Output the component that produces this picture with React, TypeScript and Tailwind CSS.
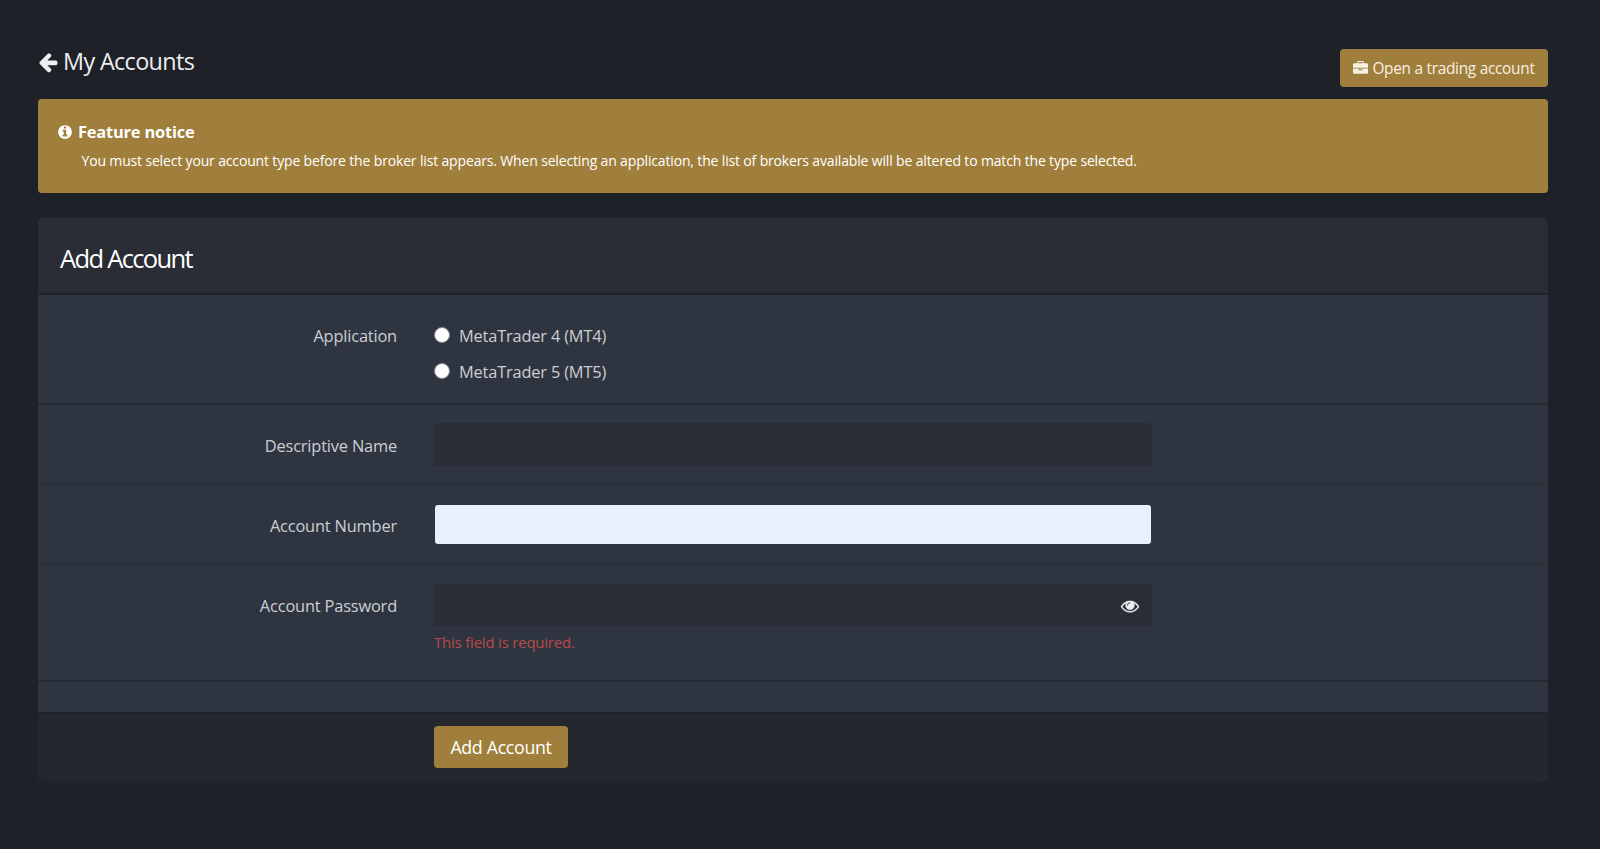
import React, { useState } from "react";

const icons = {
  arrowLeft:
    "M1664 896v128q0 53-32.5 90.5t-84.5 37.5h-704l293 294q38 36 38 90t-38 90l-75 76q-37 37-90 37-52 0-91-37l-651-652q-37-37-37-90 0-52 37-91l651-650q38-38 91-38 52 0 90 38l75 74q38 38 38 91t-38 91l-293 293h704q52 0 84.5 37.5t32.5 90.5z",
  eye: "M1664 960q-152-236-381-353 61 104 61 225 0 185-131.5 316.5t-316.5 131.5-316.5-131.5-131.5-316.5q0-121 61-225-229 117-381 353 133 205 333.5 326.5t434.5 121.5 434.5-121.5 333.5-326.5zm-720-384q0-20-14-34t-34-14q-125 0-214.5 89.5t-89.5 214.5q0 20 14 34t34 14 34-14 14-34q0-86 61-147t147-61q20 0 34-14t14-34zm848 384q0 34-20 69-140 230-376.5 368.5t-499.5 138.5-499.5-139-376.5-368q-20-35-20-69t20-69q140-229 376.5-368t499.5-139 499.5 139 376.5 368q20 35 20 69z",
  briefcase:
    "M640 256h512v-128h-512v128zm1152 640v480q0 66-47 113t-113 47h-1472q-66 0-113-47t-47-113v-480h672v160q0 26 19 45t45 19h320q26 0 45-19t19-45v-160h672zm-768 0v128h-256v-128h256zm768-480v384h-1792v-384q0-66 47-113t113-47h352v-160q0-40 28-68t68-28h576q40 0 68 28t28 68v160h352q66 0 113 47t47 113z",
  info: "M1152 1376v-160q0-14-9-23t-23-9h-96v-512q0-14-9-23t-23-9h-320q-14 0-23 9t-9 23v160q0 14 9 23t23 9h96v320h-96q-14 0-23 9t-9 23v160q0 14 9 23t23 9h448q14 0 23-9t9-23zm-128-896v-160q0-14-9-23t-23-9h-192q-14 0-23 9t-9 23v160q0 14 9 23t23 9h192q14 0 23-9t9-23zm640 416q0 209-103 385.5t-279.5 279.5-385.5 103-385.5-103-279.5-279.5-103-385.5 103-385.5 279.5-279.5 385.5-103 385.5 103 279.5 279.5 103 385.5z",
};

function Icon({ name, className }: { name: keyof typeof icons; className: string }) {
  return (
    <svg viewBox="0 0 1792 1792" fill="currentColor" className={className} aria-hidden="true">
      <path d={icons[name]} />
    </svg>
  );
}

function Row({ label, className, children }: { label: string; className: string; children: React.ReactNode }) {
  return (
    <div className={`flex border-[#252a33] ${className}`}>
      <div className="mr-[37px] w-[359px] shrink-0 pt-[10px] text-right text-[16.4px] leading-6 tracking-[-0.18px]">{label}</div>
      <div className="w-[718px]">{children}</div>
    </div>
  );
}

export default function App() {
  const [app, setApp] = useState("");
  const [visible, setVisible] = useState(false);

  return (
    <div className="h-[849px] overflow-hidden bg-[#1e2128] pt-[49px] pr-[52px] pl-[38px] font-['Open_Sans',sans-serif] text-[#cbced3]">
      <header className="flex h-[50px] items-start justify-between">
        <h1 className="-ml-px flex items-center text-[23.4px] leading-[25px] tracking-[-0.65px] text-[#eceef0]">
          <Icon name="arrowLeft" className="mr-[4px] size-[22px]" />
          My Accounts
        </h1>
        <button className="flex h-[38px] w-[208px] items-center justify-center rounded-[4px] bg-[#a07f3d] pt-px text-[15.4px] tracking-[-0.28px] text-[#f6f0e2]">
          <Icon name="briefcase" className="mr-1 size-[15px]" />
          Open a trading account
        </button>
      </header>

      <section className="h-[94px] rounded-[4px] bg-[#a07f3d] pt-[21px] pl-[19px] text-white">
        <h2 className="flex items-center text-[16.4px] leading-6 font-bold tracking-[-0.18px]">
          <Icon name="info" className="mr-[5px] size-4" />
          Feature notice
        </h2>
        <p className="mt-[7px] pl-[24.5px] text-[14px] leading-5 font-medium tracking-[-0.157px]">
          You must select your account type before the broker list appears. When selecting an application, the list of
          brokers available will be altered to match the type selected.
        </p>
      </section>

      <form className="mt-[25px] overflow-hidden rounded-[5px] bg-[#2f3540]" onSubmit={(e) => e.preventDefault()}>
        <div className="h-[77px] border-b-2 border-[#20232b] bg-[#2a2c36] pt-[24px] pl-[22px] text-[25.6px] leading-[34px] tracking-[-1.72px] text-white">
          Add Account
        </div>
        <Row label="Application" className="h-[110px] border-b-2 pt-[19px]">
          {["MetaTrader 4 (MT4)", "MetaTrader 5 (MT5)"].map((name) => (
            <label key={name} className="flex h-9 items-start pt-[10px] text-[16.4px] leading-6 tracking-[-0.18px]">
              <input
                type="radio"
                name="app"
                checked={app === name}
                onChange={() => setApp(name)}
                className="mt-[3px] mr-[9px] size-4 appearance-none rounded-full border border-[#858993] bg-white checked:border-4 checked:border-[#a07f3d]"
              />
              {name}
            </label>
          ))}
        </Row>
        <Row label="Descriptive Name" className="h-[80px] border-b pt-[19px]">
          <input
            aria-label="Descriptive Name"
            className="-mt-px block h-[43px] w-full rounded-[3px] bg-[#2a2c36] px-3 text-base text-gray-200 outline-none"
          />
        </Row>
        <Row label="Account Number" className="h-[80px] border-b pt-[19px]">
          <input
            aria-label="Account Number"
            className="mx-px mt-px block h-[39px] w-[716px] rounded-[3px] bg-[#e8f0fe] px-3 text-base text-gray-900 outline-none"
          />
        </Row>
        <Row label="Account Password" className="h-[117px] border-b-2 pt-[19px]">
          <div className="flex h-[42px] items-center rounded-[3px] bg-[#2a2c36] pr-[13px]">
            <input
              aria-label="Account Password"
              type={visible ? "text" : "password"}
              className="h-full min-w-0 flex-1 bg-transparent px-3 text-base outline-none"
            />
            <button type="button" aria-label="Toggle password" onClick={() => setVisible(!visible)} className="pt-px text-[#eceef2]">
              <Icon name="eye" className="size-[18px] overflow-visible stroke-current stroke-[30]" />
            </button>
          </div>
          <p className="mt-[5px] text-[14.9px] leading-[22px] tracking-[-0.17px] text-[#b94a48]">This field is required.</p>
        </Row>
        <div className="h-[30px]" />
        <div className="h-[69px] border-t-2 border-[#1f2229] bg-[#24272e] pt-[12px] pl-[396px]">
          <button className="flex h-[42px] w-[134px] items-center justify-center rounded-[4px] bg-[#a07f3d] text-[17.8px] tracking-[-0.32px] text-white">
            Add Account
          </button>
        </div>
      </form>
    </div>
  );
}
